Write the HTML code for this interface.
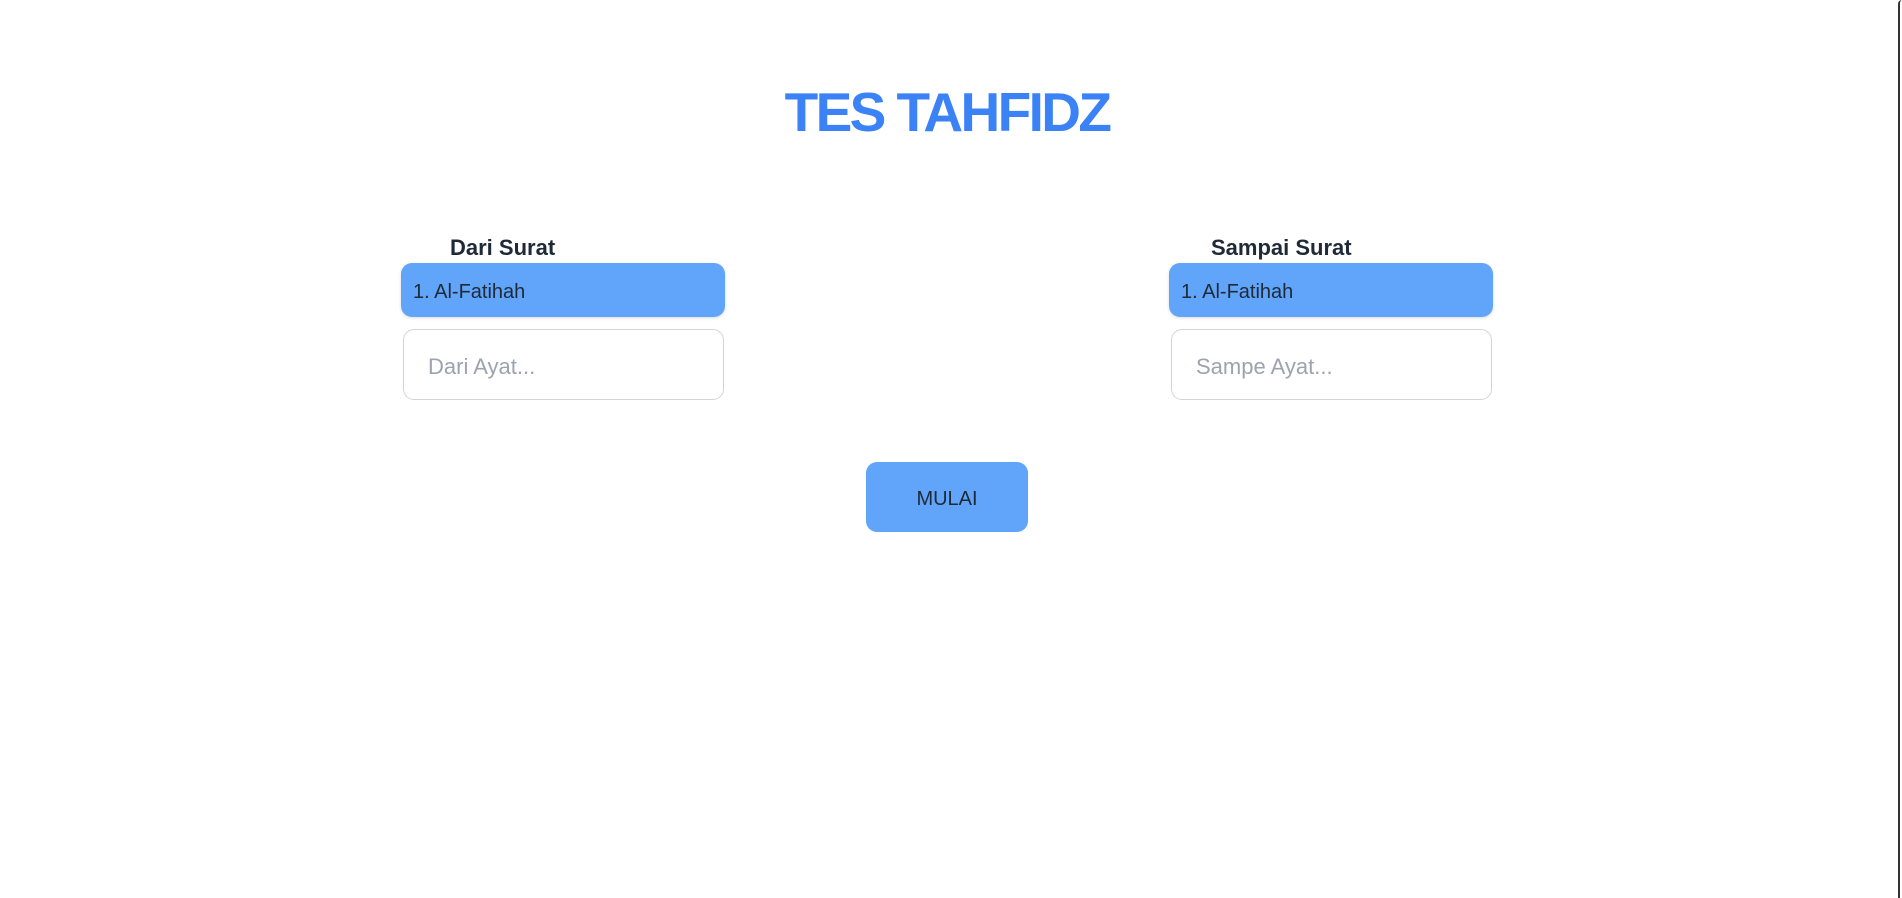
<!DOCTYPE html>
<html><head><meta charset="utf-8">
<style>
html,body{margin:0;padding:0;width:1902px;height:898px;background:#fff;overflow:hidden;font-family:"Liberation Sans",sans-serif;position:relative}
.abs{position:absolute}
h1{position:absolute;left:0;width:1894px;text-align:center;top:79px;margin:0;font-size:55px;font-weight:bold;color:#3b82f6;letter-spacing:-2.6px;line-height:66px}
.lbl{font-size:22px;font-weight:bold;color:#1f2937;top:234px;line-height:28px}
.sel{background:#60a5fa;border-radius:11px;height:54px;width:324px;top:263px;box-shadow:0 1px 3px rgba(0,0,0,.15);font-size:20px;color:#1f2937;line-height:58px;padding-left:12px;box-sizing:border-box;font-weight:500}
.inp{border:1.5px solid #d1d5db;border-radius:11px;height:71px;width:321px;top:329px;box-sizing:border-box;font-size:22px;color:#9ca3af;line-height:74px;padding-left:24px}
.btn{left:866px;top:462px;width:162px;height:70px;background:#60a5fa;border-radius:11px;text-align:center;line-height:74px;font-size:20px;color:#1f2937}
.edge{right:0;top:0;width:4px;height:898px;border-left:2px solid #333;border-top-left-radius:10px;box-sizing:border-box}
</style></head><body>
<h1>TES TAHFIDZ</h1>
<div class="abs lbl" style="left:450px">Dari Surat</div>
<div class="abs lbl" style="left:1211px">Sampai Surat</div>
<div class="abs sel" style="left:401px">1. Al-Fatihah</div>
<div class="abs sel" style="left:1169px">1. Al-Fatihah</div>
<div class="abs inp" style="left:403px">Dari Ayat...</div>
<div class="abs inp" style="left:1171px">Sampe Ayat...</div>
<div class="abs btn">MULAI</div>
<div class="abs edge"></div>
</body></html>
